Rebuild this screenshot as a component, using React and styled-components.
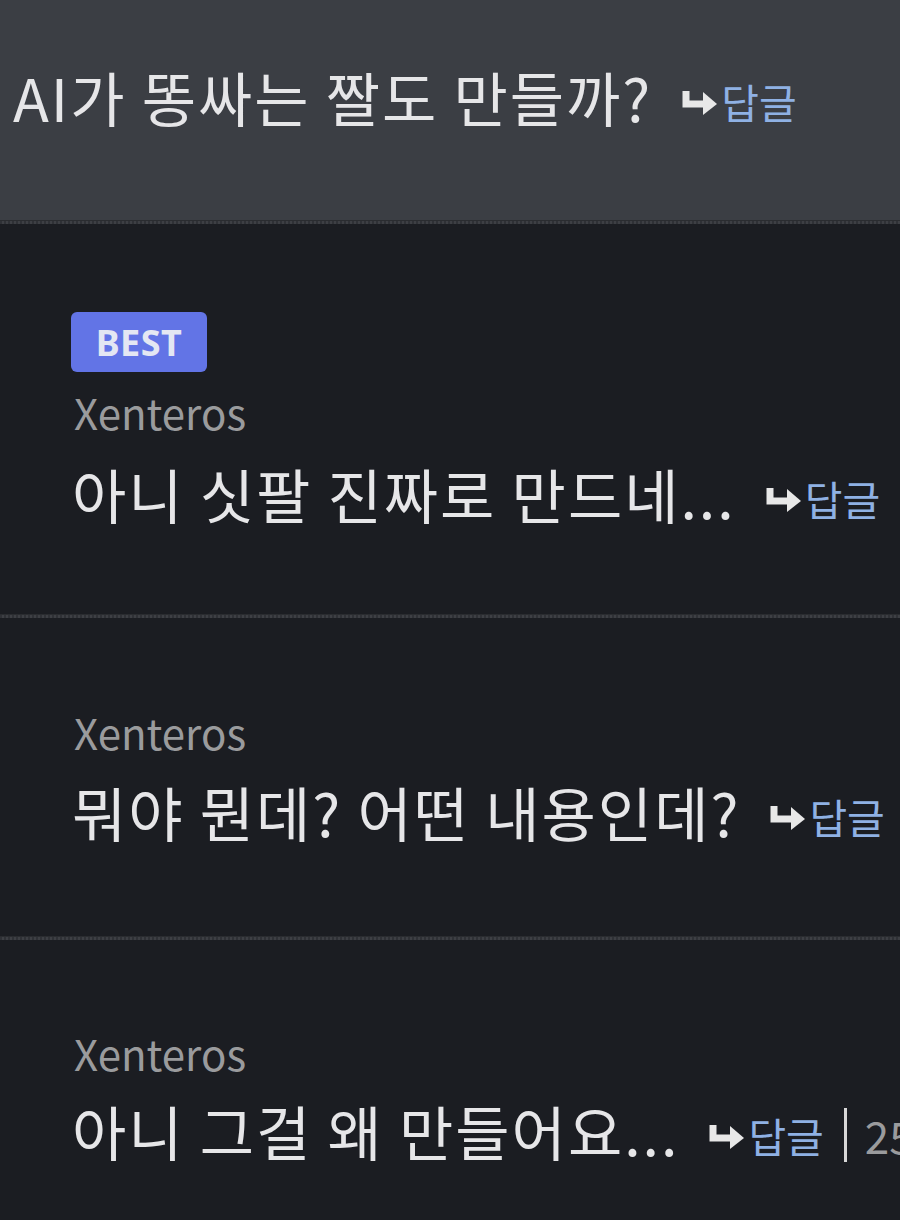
import React from 'react';
import styled, { createGlobalStyle } from 'styled-components';

const GlobalStyle = createGlobalStyle`
  html, body {
    margin: 0;
    padding: 0;
    background: #1b1d22;
    overflow: hidden;
  }
  body {
    font-family: "Noto Sans CJK KR", "Noto Sans", sans-serif;
  }
`;

const Page = styled.div`
  width: 900px;
  height: 1220px;
  overflow: hidden;
  background: #1b1d22;
`;

const Parent = styled.div`
  height: 220px;
  background: #3b3e44;
  box-sizing: border-box;
  padding: 55px 0 0 13px;
`;

const Divider = styled.div`
  height: 3px;
  background: repeating-linear-gradient(90deg, #2f3136 0 2px, #3d3f44 2px 4px);
  border-top: 1px solid #2a2c30;
`;

const Comment = styled.div`
  height: ${p => p.h}px;
  box-sizing: border-box;
  padding: ${p => p.top}px 0 0 72px;
  white-space: nowrap;
`;

const Badge = styled.div`
  display: inline-flex;
  align-items: center;
  justify-content: center;
  width: 136px;
  height: 60px;
  margin-left: -1px;
  border-radius: 6px;
  background: #6274e6;
  color: #e4e7f3;
  font: 700 36px "Noto Sans", sans-serif;
  letter-spacing: 0.5px;
`;

const Author = styled.div`
  margin-top: ${p => p.mt || 0}px;
  color: #9a9b9d;
  font-size: 42px;
  line-height: 52px;
  margin-left: 2px;
`;

const Line = styled.div`
  display: flex;
  align-items: center;
  margin-top: ${p => p.mt || 0}px;
  color: #e6e6e8;
  font-size: 59px;
  letter-spacing: 2px;
  line-height: 76px;
  & > * { flex-shrink: 0; }
`;

const Reply = styled.span`
  display: inline-flex;
  align-items: center;
  margin-left: ${p => p.ml || 30}px;
  color: #8fb1e4;
  font-size: 41px;
  letter-spacing: 0;
  padding-top: 8px;
  svg { margin-right: 2px; }
`;

const Sep = styled.span`
  display: inline-block;
  width: 3px;
  height: 54px;
  background: #d8d8d8;
  margin: 8px 18px 0 20px;
`;

const Count = styled.span`
  color: #9a9b9d;
  font-size: 44px;
  letter-spacing: 0;
  padding-top: 8px;
`;

const ArrowIcon = () => (
  <svg width="37" height="27" viewBox="0 0 37 27">
    <path d="M4 3 V16 H23" fill="none" stroke="#e8e8e8" strokeWidth="7" />
    <path d="M21 4 L35 16 L21 27 Z" fill="#e8e8e8" />
  </svg>
);

const ReplyLink = ({ ml }) => (
  <Reply ml={ml}>
    <ArrowIcon />
    답글
  </Reply>
);

export default function App() {
  return (
    <Page>
      <GlobalStyle />
      <Parent>
        <Line>
          AI가 똥싸는 짤도 만들까?
          <ReplyLink ml={30} />
        </Line>
      </Parent>
      <Divider />
      <Comment h={390} top={88}>
        <Badge>BEST</Badge>
        <Author mt={14}>Xenteros</Author>
        <Line mt={14}>
          아니 싯팔 진짜로 만드네...
          <ReplyLink />
        </Line>
      </Comment>
      <Divider />
      <Comment h={318} top={88}>
        <Author>Xenteros</Author>
        <Line mt={12}>
          뭐야 뭔데? 어떤 내용인데?
          <ReplyLink />
        </Line>
      </Comment>
      <Divider />
      <Comment h={300} top={87}>
        <Author>Xenteros</Author>
        <Line mt={10}>
          아니 그걸 왜 만들어요...
          <ReplyLink />
          <Sep />
          <Count>25</Count>
        </Line>
      </Comment>
    </Page>
  );
}
